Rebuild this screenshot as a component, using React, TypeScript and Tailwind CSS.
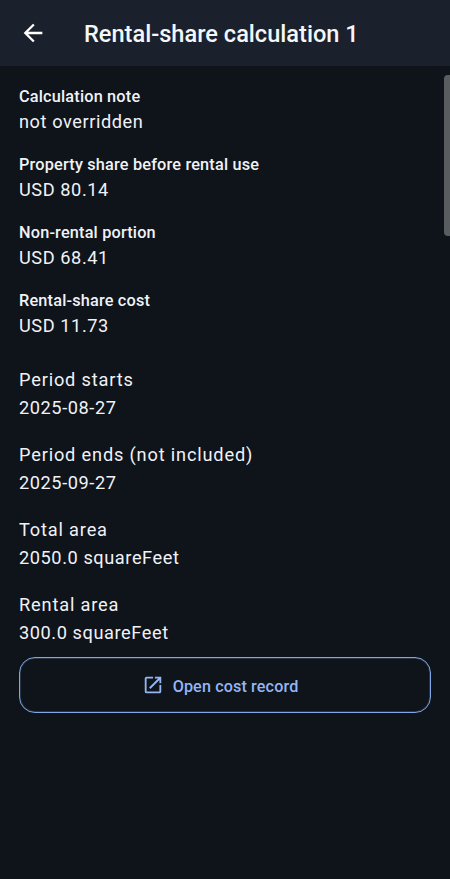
import React from "react";

const boldRows = [
  { label: "Calculation note", value: "not overridden" },
  { label: "Property share before rental use", value: "USD 80.14" },
  { label: "Non-rental portion", value: "USD 68.41" },
  { label: "Rental-share cost", value: "USD 11.73" },
];

const plainRows = [
  { label: "Period starts", value: "2025-08-27" },
  { label: "Period ends (not included)", value: "2025-09-27" },
  { label: "Total area", value: "2050.0 squareFeet" },
  { label: "Rental area", value: "300.0 squareFeet" },
];

export default function App() {
  return (
    <div className="relative flex h-[879px] w-[450px] flex-col overflow-hidden bg-[#0f131a] font-['Roboto',sans-serif] text-[#f0f2f7]">
      <header className="flex h-[66px] shrink-0 items-center bg-[#1a212c]">
        <button className="ml-[19px] flex h-7 w-7 items-center justify-center text-white">
          <svg width="28" height="28" viewBox="0 0 24 24" fill="currentColor">
            <path d="M20 11H7.83l5.59-5.59L12 4l-8 8 8 8 1.41-1.41L7.83 13H20v-2z" />
          </svg>
        </button>
        <h1 className="mt-[2px] ml-[37px] text-[23.6px] leading-8 font-medium text-[#f4f6fa]">
          Rental-share calculation 1
        </h1>
      </header>

      <main className="flex flex-col px-[19px] pt-[19px]">
        <div className="flex flex-col gap-[18px]">
          {boldRows.map((row) => (
            <div key={row.label}>
              <p className="text-[16.3px] leading-[23px] font-medium tracking-[0.18px]">{row.label}</p>
              <p className="text-[18.2px] leading-[27px] tracking-[0.57px]">{row.value}</p>
            </div>
          ))}
        </div>

        <div className="mt-[27px] flex flex-col gap-5">
          {plainRows.map((row) => (
            <div key={row.label} className="flex flex-col gap-px">
              <p className="text-[18.2px] leading-[27px] tracking-[0.83px]">{row.label}</p>
              <p className="text-[18.2px] leading-[27px] tracking-[0.57px]">{row.value}</p>
            </div>
          ))}
        </div>

        <button className="mt-[11px] flex h-14 w-full items-center justify-center gap-[9px] rounded-2xl border border-[#7fa6e6] pr-[9px] text-[#93b6f3] ring-1 ring-[#7196d8]/25 ring-inset">
          <svg width="22" height="22" viewBox="0 0 24 24" fill="currentColor" className="-ml-px">
            <path d="M19 19H5V5h7V3H5a2 2 0 0 0-2 2v14a2 2 0 0 0 2 2h14c1.1 0 2-.9 2-2v-7h-2v7zM14 3v2h3.59l-9.83 9.83 1.41 1.41L19 6.41V10h2V3h-7z" />
          </svg>
          <span className="mt-[2px] text-[16.2px] leading-[23px] font-medium tracking-[0.115px]">Open cost record</span>
        </button>
      </main>

      <div className="absolute top-[75px] right-0 h-[161px] w-[6px] rounded-l-[4px] bg-[#5a5d60]" />
    </div>
  );
}
